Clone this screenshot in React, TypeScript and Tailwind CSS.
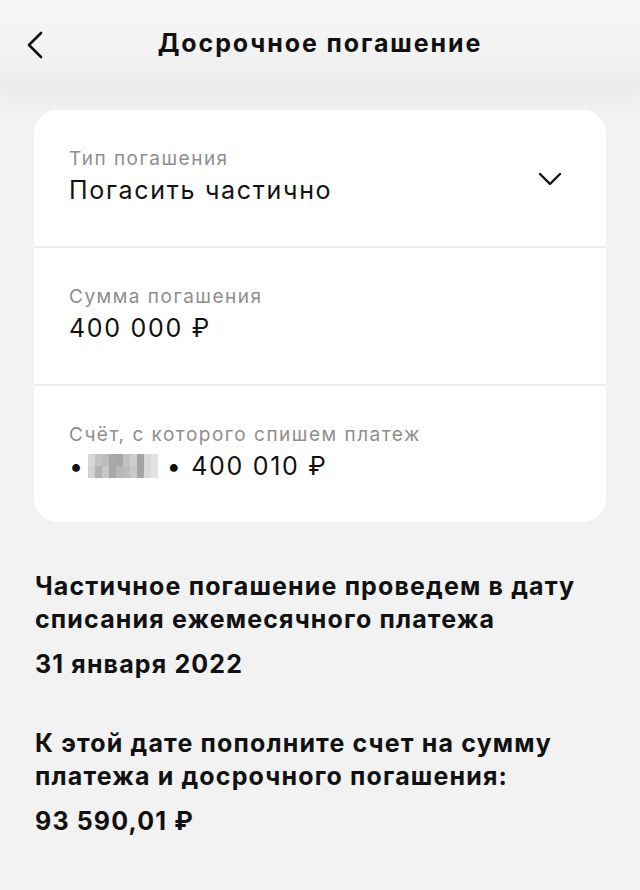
import React from 'react'

const font = { fontFamily: 'Inter, "Noto Sans", sans-serif' }

const Pixelated = () => {
    const cells = [
        '#d6d6d6', '#c4c4c4', '#bdbdbd', '#a9a9a9', '#a6a6a6', '#c2c2c2', '#cfcfcf', '#a3a3a3', '#d9d9d9', '#e2e2e2',
        '#d2d2d2', '#b3b3b3', '#c8c8c8', '#a8a8a8', '#b7b7b7', '#bcbcbc', '#c9c9c9', '#a5a5a5', '#dadada', '#e4e4e4',
    ]
    return (
        <span className="inline-grid grid-cols-[repeat(10,7px)] grid-rows-[repeat(2,12px)] ml-[0px] mr-[9px]">
            {cells.map((c, i) => (
                <span key={i} className="block" style={{ backgroundColor: c }}/>
            ))}
        </span>
    )
}

const Row = ({ label, children, right }: { label: string, children: React.ReactNode, right?: React.ReactNode }) => (
    <div className="flex items-center justify-between h-[136px] pl-[35px] pr-[43px]">
        <div className="flex flex-col -mt-[4px]">
            <div className="text-[19px] leading-[26px] text-[#8e8e8e] tracking-[1.5px]">{label}</div>
            <div className="text-[25px] leading-[34px] text-[#111] mt-[1px] tracking-[1.7px] flex items-center">{children}</div>
        </div>
        {right}
    </div>
)

export default function App() {
    return (
        <div className="w-[640px] h-[890px] bg-[#f2f2f2] overflow-hidden" style={font}>
            <div className="bg-gradient-to-b from-[#f6f6f6] via-[#f3f3f3] to-[#ececec] shadow-[0_10px_20px_rgba(0,0,0,0.03)]">
                <div className="relative h-[90px] flex items-center justify-center">
                    <svg className="absolute left-[24px] top-[31px]" width="22" height="28" viewBox="0 0 22 28" fill="none">
                        <path d="M17 2 L5 14 L17 26" stroke="#111" strokeWidth="2.6" strokeLinecap="round" strokeLinejoin="round"/>
                    </svg>
                    <h1 className="text-[25px] font-bold tracking-[1.9px] text-[#111] -mt-[2px]">Досрочное погашение</h1>
                </div>
            </div>
            <div className="px-[34px] pt-[20px]">
                <div className="bg-white rounded-[24px] flex flex-col">
                    <Row label="Тип погашения" right={
                        <svg className="mt-[2px]" width="26" height="16" viewBox="0 0 26 16" fill="none">
                            <path d="M3 3 L13 13 L23 3" stroke="#111" strokeWidth="2.4" strokeLinecap="round" strokeLinejoin="round"/>
                        </svg>
                    }>
                        Погасить частично
                    </Row>
                    <div className="h-[2px] bg-[#ececec]"/>
                    <Row label="Сумма погашения">400 000 ₽</Row>
                    <div className="h-[2px] bg-[#ececec]"/>
                    <Row label="Счёт, с которого спишем платеж">
                        <span className="mr-[3px]">•</span>
                        <Pixelated/>
                        <span>• 400 010 ₽</span>
                    </Row>
                </div>
            </div>
            <div className="px-[35px] pt-[48px] text-[#111] tracking-[1.15px]">
                <p className="text-[25px] font-bold leading-[33px]">
                    Частичное погашение проведем в дату списания ежемесячного платежа
                </p>
                <p className="text-[25px] font-bold leading-[33px] mt-[12px]">31 января 2022</p>
                <p className="text-[25px] font-bold leading-[33px] mt-[46px]">
                    К этой дате пополните счет на сумму платежа и досрочного погашения:
                </p>
                <p className="text-[25px] font-bold leading-[33px] mt-[12px]">93 590,01 ₽</p>
            </div>
        </div>
    )
}
